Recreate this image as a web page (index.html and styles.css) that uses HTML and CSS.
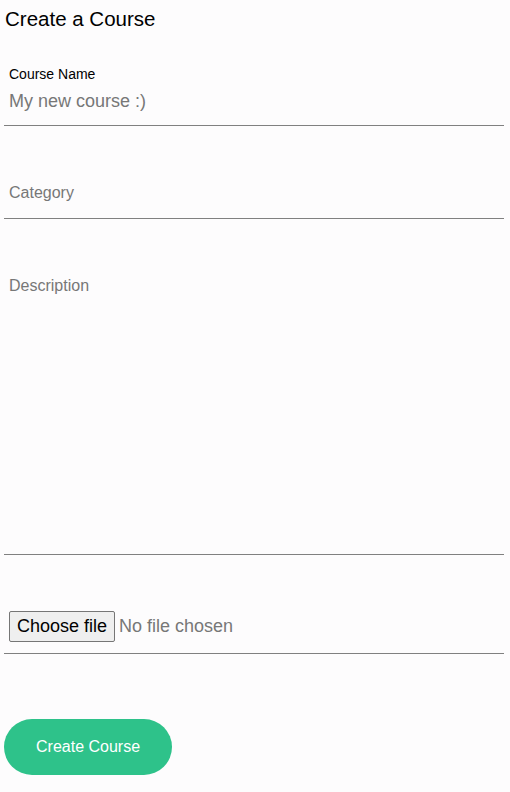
FILE: index.html
```html
<!DOCTYPE html>
<html>
<head>
<meta charset="utf-8">
<link rel="stylesheet" href="styles.css">
</head>
<body>
<div class="page">
  <h1 class="title">Create a Course</h1>
  <form class="form">
    <div class="field field-name">
      <label class="label" for="name">Course Name</label>
      <input class="input input-lg" id="name" type="text" placeholder="My new course :)">
    </div>
    <div class="field field-cat">
      <input class="input" type="text" placeholder="Category">
    </div>
    <div class="field field-desc">
      <textarea class="input textarea" placeholder="Description"></textarea>
    </div>
    <div class="field field-file">
      <label class="file">
        <input class="file-input" type="file">
        <span class="file-btn">Choose file</span>
        <span class="file-name">No file chosen</span>
      </label>
    </div>
    <button class="submit" type="button">Create Course</button>
  </form>
</div>
</body>
</html>
```
FILE: styles.css
```css
* { box-sizing: border-box; }
html, body { margin: 0; padding: 0; background: #fdfcfd; }
body { font-family: "Liberation Sans", Arial, sans-serif; color: #000; }
.page { padding: 7px 6px 0 4px; }
.title { margin: 0; font-size: 20.5px; line-height: 23px; font-weight: normal; padding-left: 1px; }
.form { display: flex; flex-direction: column; align-items: stretch; }
.field { border-bottom: 1px solid #808080; padding-left: 5px; display: flex; flex-direction: column; }
.field-name { margin-top: 36px; padding-bottom: 13px; }
.label { font-size: 14px; line-height: 16px; }
.input { border: 0; outline: 0; background: transparent; padding: 0; margin: 0; font-family: "Liberation Sans", Arial, sans-serif; font-size: 16px; line-height: 18px; height: 18px; color: #000; width: 100%; }
.input::placeholder { color: #777; }
.input-lg { font-size: 18px; line-height: 22px; height: 22px; margin-top: 8px; }
.field-cat { padding-top: 58px; padding-bottom: 16px; }
.field-desc { padding-top: 58px; }
.textarea { height: 277px; resize: none; display: block; }
.field-file { padding-top: 56px; padding-bottom: 11px; }
.file { display: flex; align-items: center; gap: 4px; font-size: 18px; line-height: 21px; cursor: default; }
.file-input { display: none; }
.file-btn { color: #000; background: #efefef; border: 1px solid #767676; border-radius: 2px; padding: 4px 7px; }
.file-name { color: #777; }
.submit { align-self: flex-start; margin-top: 65px; height: 56px; padding: 0 32px; border: 0; border-radius: 28px; background: #2ec28a; color: #fff; font-family: "Liberation Sans", Arial, sans-serif; font-size: 16px; line-height: 18px; }
```
